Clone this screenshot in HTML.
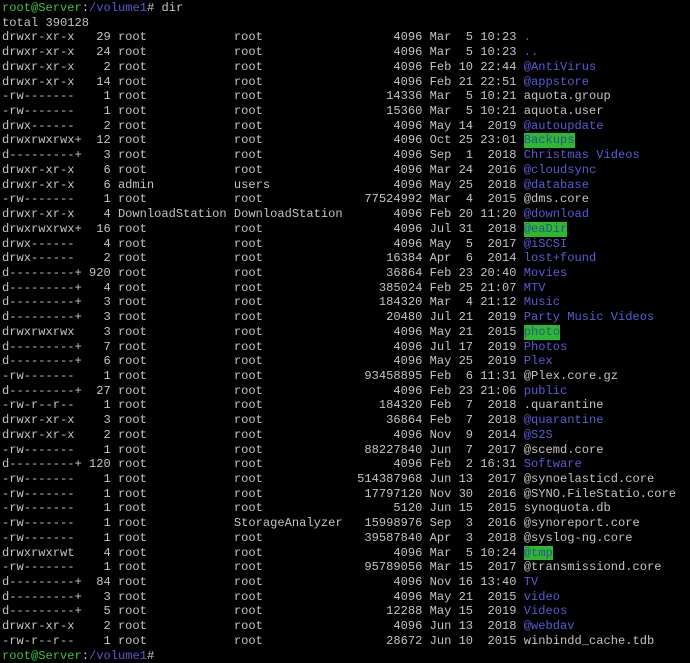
<!DOCTYPE html>
<html><head><meta charset="utf-8"><style>
html,body{margin:0;padding:0;background:#000;width:690px;height:653px;overflow:hidden}
#t{position:absolute;left:2px;top:1px;font-family:"Liberation Mono","DejaVu Sans Mono",monospace;font-size:12.08px;color:#c4c4c4;line-height:14.72px}
.r{height:14.72px;white-space:pre}
.r span{display:inline-block}
.p{width:11ch}.l{width:4ch;text-align:right}.o{margin-left:1ch;width:16ch}.g{width:16ch}
.s{width:10ch;text-align:right}.m{margin-left:1ch;width:4ch}.d{width:2ch;text-align:right}
.t{width:6ch;text-align:right}.n{margin-left:1ch}
.b{color:#5a5ad8}.gr{background:#2cba2c;color:#2e4fa0}
.pg{color:#3cc43c}.pb{color:#5a5ad8}
</style></head><body><div id="t">
<div class="r"><span class="pg">root@Server</span>:<span class="pb">/volume1</span># dir</div>
<div class="r">total 390128</div>
<div class="r"><span class="p">drwxr-xr-x</span><span class="l">29</span><span class="o">root</span><span class="g">root</span><span class="s">4096</span><span class="m">Mar</span><span class="d">5</span><span class="t">10:23</span><span class="n b">.</span></div>
<div class="r"><span class="p">drwxr-xr-x</span><span class="l">24</span><span class="o">root</span><span class="g">root</span><span class="s">4096</span><span class="m">Mar</span><span class="d">5</span><span class="t">10:23</span><span class="n b">..</span></div>
<div class="r"><span class="p">drwxr-xr-x</span><span class="l">2</span><span class="o">root</span><span class="g">root</span><span class="s">4096</span><span class="m">Feb</span><span class="d">10</span><span class="t">22:44</span><span class="n b">@AntiVirus</span></div>
<div class="r"><span class="p">drwxr-xr-x</span><span class="l">14</span><span class="o">root</span><span class="g">root</span><span class="s">4096</span><span class="m">Feb</span><span class="d">21</span><span class="t">22:51</span><span class="n b">@appstore</span></div>
<div class="r"><span class="p">-rw-------</span><span class="l">1</span><span class="o">root</span><span class="g">root</span><span class="s">14336</span><span class="m">Mar</span><span class="d">5</span><span class="t">10:21</span><span class="n">aquota.group</span></div>
<div class="r"><span class="p">-rw-------</span><span class="l">1</span><span class="o">root</span><span class="g">root</span><span class="s">15360</span><span class="m">Mar</span><span class="d">5</span><span class="t">10:21</span><span class="n">aquota.user</span></div>
<div class="r"><span class="p">drwx------</span><span class="l">2</span><span class="o">root</span><span class="g">root</span><span class="s">4096</span><span class="m">May</span><span class="d">14</span><span class="t">2019</span><span class="n b">@autoupdate</span></div>
<div class="r"><span class="p">drwxrwxrwx+</span><span class="l">12</span><span class="o">root</span><span class="g">root</span><span class="s">4096</span><span class="m">Oct</span><span class="d">25</span><span class="t">23:01</span><span class="n gr">Backups</span></div>
<div class="r"><span class="p">d---------+</span><span class="l">3</span><span class="o">root</span><span class="g">root</span><span class="s">4096</span><span class="m">Sep</span><span class="d">1</span><span class="t">2018</span><span class="n b">Christmas Videos</span></div>
<div class="r"><span class="p">drwxr-xr-x</span><span class="l">6</span><span class="o">root</span><span class="g">root</span><span class="s">4096</span><span class="m">Mar</span><span class="d">24</span><span class="t">2016</span><span class="n b">@cloudsync</span></div>
<div class="r"><span class="p">drwxr-xr-x</span><span class="l">6</span><span class="o">admin</span><span class="g">users</span><span class="s">4096</span><span class="m">May</span><span class="d">25</span><span class="t">2018</span><span class="n b">@database</span></div>
<div class="r"><span class="p">-rw-------</span><span class="l">1</span><span class="o">root</span><span class="g">root</span><span class="s">77524992</span><span class="m">Mar</span><span class="d">4</span><span class="t">2015</span><span class="n">@dms.core</span></div>
<div class="r"><span class="p">drwxr-xr-x</span><span class="l">4</span><span class="o">DownloadStation</span><span class="g">DownloadStation</span><span class="s">4096</span><span class="m">Feb</span><span class="d">20</span><span class="t">11:20</span><span class="n b">@download</span></div>
<div class="r"><span class="p">drwxrwxrwx+</span><span class="l">16</span><span class="o">root</span><span class="g">root</span><span class="s">4096</span><span class="m">Jul</span><span class="d">31</span><span class="t">2018</span><span class="n gr">@eaDir</span></div>
<div class="r"><span class="p">drwx------</span><span class="l">4</span><span class="o">root</span><span class="g">root</span><span class="s">4096</span><span class="m">May</span><span class="d">5</span><span class="t">2017</span><span class="n b">@iSCSI</span></div>
<div class="r"><span class="p">drwx------</span><span class="l">2</span><span class="o">root</span><span class="g">root</span><span class="s">16384</span><span class="m">Apr</span><span class="d">6</span><span class="t">2014</span><span class="n b">lost+found</span></div>
<div class="r"><span class="p">d---------+</span><span class="l">920</span><span class="o">root</span><span class="g">root</span><span class="s">36864</span><span class="m">Feb</span><span class="d">23</span><span class="t">20:40</span><span class="n b">Movies</span></div>
<div class="r"><span class="p">d---------+</span><span class="l">4</span><span class="o">root</span><span class="g">root</span><span class="s">385024</span><span class="m">Feb</span><span class="d">25</span><span class="t">21:07</span><span class="n b">MTV</span></div>
<div class="r"><span class="p">d---------+</span><span class="l">3</span><span class="o">root</span><span class="g">root</span><span class="s">184320</span><span class="m">Mar</span><span class="d">4</span><span class="t">21:12</span><span class="n b">Music</span></div>
<div class="r"><span class="p">d---------+</span><span class="l">3</span><span class="o">root</span><span class="g">root</span><span class="s">20480</span><span class="m">Jul</span><span class="d">21</span><span class="t">2019</span><span class="n b">Party Music Videos</span></div>
<div class="r"><span class="p">drwxrwxrwx</span><span class="l">3</span><span class="o">root</span><span class="g">root</span><span class="s">4096</span><span class="m">May</span><span class="d">21</span><span class="t">2015</span><span class="n gr">photo</span></div>
<div class="r"><span class="p">d---------+</span><span class="l">7</span><span class="o">root</span><span class="g">root</span><span class="s">4096</span><span class="m">Jul</span><span class="d">17</span><span class="t">2019</span><span class="n b">Photos</span></div>
<div class="r"><span class="p">d---------+</span><span class="l">6</span><span class="o">root</span><span class="g">root</span><span class="s">4096</span><span class="m">May</span><span class="d">25</span><span class="t">2019</span><span class="n b">Plex</span></div>
<div class="r"><span class="p">-rw-------</span><span class="l">1</span><span class="o">root</span><span class="g">root</span><span class="s">93458895</span><span class="m">Feb</span><span class="d">6</span><span class="t">11:31</span><span class="n">@Plex.core.gz</span></div>
<div class="r"><span class="p">d---------+</span><span class="l">27</span><span class="o">root</span><span class="g">root</span><span class="s">4096</span><span class="m">Feb</span><span class="d">23</span><span class="t">21:06</span><span class="n b">public</span></div>
<div class="r"><span class="p">-rw-r--r--</span><span class="l">1</span><span class="o">root</span><span class="g">root</span><span class="s">184320</span><span class="m">Feb</span><span class="d">7</span><span class="t">2018</span><span class="n">.quarantine</span></div>
<div class="r"><span class="p">drwxr-xr-x</span><span class="l">3</span><span class="o">root</span><span class="g">root</span><span class="s">36864</span><span class="m">Feb</span><span class="d">7</span><span class="t">2018</span><span class="n b">@quarantine</span></div>
<div class="r"><span class="p">drwxr-xr-x</span><span class="l">2</span><span class="o">root</span><span class="g">root</span><span class="s">4096</span><span class="m">Nov</span><span class="d">9</span><span class="t">2014</span><span class="n b">@S2S</span></div>
<div class="r"><span class="p">-rw-------</span><span class="l">1</span><span class="o">root</span><span class="g">root</span><span class="s">88227840</span><span class="m">Jun</span><span class="d">7</span><span class="t">2017</span><span class="n">@scemd.core</span></div>
<div class="r"><span class="p">d---------+</span><span class="l">120</span><span class="o">root</span><span class="g">root</span><span class="s">4096</span><span class="m">Feb</span><span class="d">2</span><span class="t">16:31</span><span class="n b">Software</span></div>
<div class="r"><span class="p">-rw-------</span><span class="l">1</span><span class="o">root</span><span class="g">root</span><span class="s">514387968</span><span class="m">Jun</span><span class="d">13</span><span class="t">2017</span><span class="n">@synoelasticd.core</span></div>
<div class="r"><span class="p">-rw-------</span><span class="l">1</span><span class="o">root</span><span class="g">root</span><span class="s">17797120</span><span class="m">Nov</span><span class="d">30</span><span class="t">2016</span><span class="n">@SYNO.FileStatio.core</span></div>
<div class="r"><span class="p">-rw-------</span><span class="l">1</span><span class="o">root</span><span class="g">root</span><span class="s">5120</span><span class="m">Jun</span><span class="d">15</span><span class="t">2015</span><span class="n">synoquota.db</span></div>
<div class="r"><span class="p">-rw-------</span><span class="l">1</span><span class="o">root</span><span class="g">StorageAnalyzer</span><span class="s">15998976</span><span class="m">Sep</span><span class="d">3</span><span class="t">2016</span><span class="n">@synoreport.core</span></div>
<div class="r"><span class="p">-rw-------</span><span class="l">1</span><span class="o">root</span><span class="g">root</span><span class="s">39587840</span><span class="m">Apr</span><span class="d">3</span><span class="t">2018</span><span class="n">@syslog-ng.core</span></div>
<div class="r"><span class="p">drwxrwxrwt</span><span class="l">4</span><span class="o">root</span><span class="g">root</span><span class="s">4096</span><span class="m">Mar</span><span class="d">5</span><span class="t">10:24</span><span class="n gr">@tmp</span></div>
<div class="r"><span class="p">-rw-------</span><span class="l">1</span><span class="o">root</span><span class="g">root</span><span class="s">95789056</span><span class="m">Mar</span><span class="d">15</span><span class="t">2017</span><span class="n">@transmissiond.core</span></div>
<div class="r"><span class="p">d---------+</span><span class="l">84</span><span class="o">root</span><span class="g">root</span><span class="s">4096</span><span class="m">Nov</span><span class="d">16</span><span class="t">13:40</span><span class="n b">TV</span></div>
<div class="r"><span class="p">d---------+</span><span class="l">3</span><span class="o">root</span><span class="g">root</span><span class="s">4096</span><span class="m">May</span><span class="d">21</span><span class="t">2015</span><span class="n b">video</span></div>
<div class="r"><span class="p">d---------+</span><span class="l">5</span><span class="o">root</span><span class="g">root</span><span class="s">12288</span><span class="m">May</span><span class="d">15</span><span class="t">2019</span><span class="n b">Videos</span></div>
<div class="r"><span class="p">drwxr-xr-x</span><span class="l">2</span><span class="o">root</span><span class="g">root</span><span class="s">4096</span><span class="m">Jun</span><span class="d">13</span><span class="t">2018</span><span class="n b">@webdav</span></div>
<div class="r"><span class="p">-rw-r--r--</span><span class="l">1</span><span class="o">root</span><span class="g">root</span><span class="s">28672</span><span class="m">Jun</span><span class="d">10</span><span class="t">2015</span><span class="n">winbindd_cache.tdb</span></div>
<div class="r"><span class="pg">root@Server</span>:<span class="pb">/volume1</span># </div>
</div></body></html>
